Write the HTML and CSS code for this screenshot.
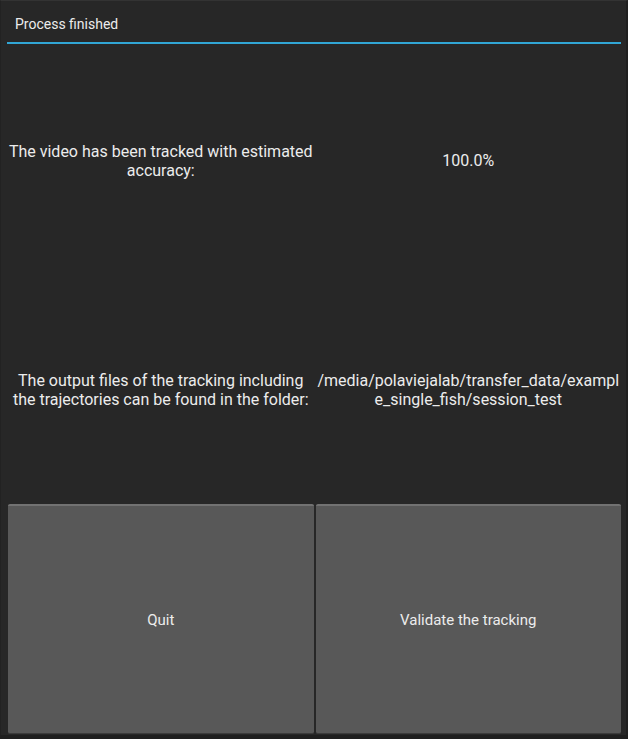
FILE: index.html
```html
<!DOCTYPE html>
<html>
<head>
<meta charset="utf-8">
<link rel="stylesheet" href="styles.css">
</head>
<body>
<div class="popup">
  <div class="title">Process finished</div>
  <div class="separator"></div>
  <div class="content">
    <div class="cell label">The video has been tracked with estimated accuracy:</div>
    <div class="cell label">100.0%</div>
    <div class="cell label">The output files of the tracking including the trajectories can be found in the folder:</div>
    <div class="cell label">/media/polaviejalab/transfer_data/exampl<br>e_single_fish/session_test</div>
    <button class="btn">Quit</button>
    <button class="btn">Validate the tracking</button>
  </div>
</div>
</body>
</html>
```
FILE: styles.css
```css
html, body {
  margin: 0;
  padding: 0;
  background: #1e1e1e;
}
.popup {
  width: 628px;
  height: 739px;
  box-sizing: border-box;
  background: #272727;
  border-top: 1px solid #333333;
  border-left: 1px solid #222222;
  border-right: 2px solid #1f1f1f;
  border-bottom: 4px solid #1f1f1f;
  display: flex;
  flex-direction: column;
  font-family: Roboto, "Liberation Sans", sans-serif;
  color: #ececec;
}
.title {
  height: 41px;
  box-sizing: border-box;
  padding: 15px 0 0 14px;
  font-size: 14px;
  line-height: 17px;
}
.separator {
  height: 2px;
  margin: 0 5px 0 6px;
  background: #31a6d5;
}
.content {
  flex: 1;
  display: grid;
  grid-template-columns: 1fr 1fr;
  grid-template-rows: 1fr 1fr 1fr;
  column-gap: 2px;
  padding: 1px 5px 1px 7px;
}
.cell {
  display: flex;
  align-items: center;
  justify-content: center;
  text-align: center;
  font-size: 16px;
  line-height: 19px;
  padding-top: 2px;
}
.btn {
  margin: 0;
  padding: 0;
  font-family: Roboto, "Liberation Sans", sans-serif;
  font-size: 15px;
  color: #ececec;
  background: #585858;
  border: none;
  border-top: 2px solid #727272;
  border-bottom: 1px solid #3c3c3c;
  border-radius: 2px;
}
```
